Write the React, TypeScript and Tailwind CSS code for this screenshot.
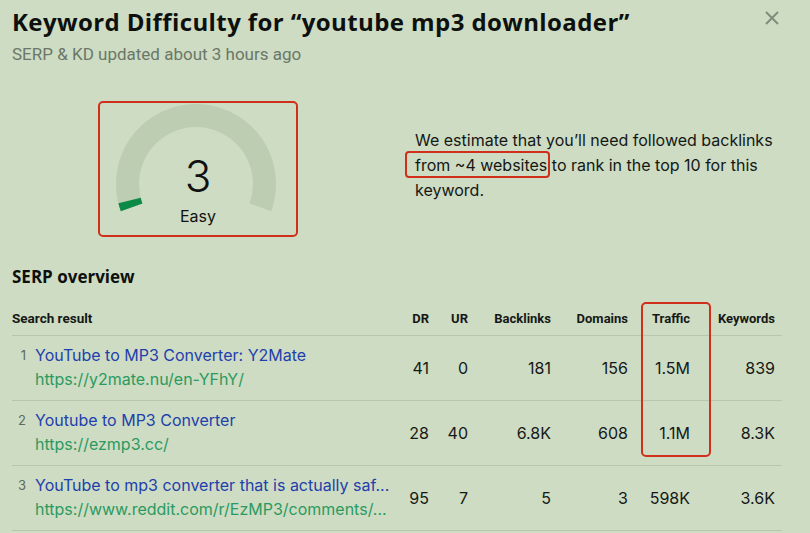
import React from "react";

const rows = [
  { n: 1, title: "YouTube to MP3 Converter: Y2Mate", url: "https://y2mate.nu/en-YFhY/", dr: "41", ur: "0", bl: "181", dom: "156", tr: "1.5M", kw: "839" },
  { n: 2, title: "Youtube to MP3 Converter", url: "https://ezmp3.cc/", dr: "28", ur: "40", bl: "6.8K", dom: "608", tr: "1.1M", kw: "8.3K" },
  { n: 3, title: "YouTube to mp3 converter that is actually saf...", url: "https://www.reddit.com/r/EzMP3/comments/...", dr: "95", ur: "7", bl: "5", dom: "3", tr: "598K", kw: "3.6K" },
];

const head = "font-['Roboto',sans-serif] font-bold text-[13px] text-[#161816]";
const grid = "grid grid-cols-[387px_30px_39px_83px_77px_62px_85px]";

function Gauge() {
  const cx = 96, cy = 81, r = 68.5;
  const pt = (deg: number) => {
    const a = (deg * Math.PI) / 180;
    return `${(cx + r * Math.cos(a)).toFixed(2)} ${(cy + r * Math.sin(a)).toFixed(2)}`;
  };
  return (
    <div className="relative w-[200px] h-[136px] border-2 border-[#d0301b] rounded-[5px]">
      <svg className="absolute left-0 top-0" width="196" height="132" viewBox="0 0 196 132">
        <path d={`M ${pt(160)} A ${r} ${r} 0 1 1 ${pt(380)}`} fill="none" stroke="#bccdb2" strokeWidth="23" />
        <path d={`M ${pt(160)} A ${r} ${r} 0 0 1 ${pt(166)}`} fill="none" stroke="#0b8a45" strokeWidth="23" />
      </svg>
      <div className="absolute left-0 top-0 w-[196px] flex flex-col items-center font-['Inter',sans-serif] text-[#111]">
        <div className="mt-[47px] text-[44px] leading-[52px] font-light">3</div>
        <div className="mt-[4px] text-[16px] leading-[20px]">Easy</div>
      </div>
    </div>
  );
}

export default function App() {
  return (
    <div className="w-[810px] h-[533px] overflow-hidden bg-[#cddcc3] relative pl-[12px]">
      <svg className="absolute left-[765px] top-[11px]" width="14" height="14" viewBox="0 0 14 14">
        <path d="M1 1 L13 13 M13 1 L1 13" stroke="#7f8e7c" strokeWidth="2" />
      </svg>
      <div className="pt-[6px] font-['Open_Sans',sans-serif] font-bold text-[24px] leading-[32px] text-[#0e100e] tracking-[0.4px]">
        Keyword Difficulty for “youtube mp3 downloader”
      </div>
      <div className="mt-[4px] font-['Roboto',sans-serif] text-[17px] leading-[24px] text-[#6b7768]">
        SERP &amp; KD updated about 3 hours ago
      </div>
      <div className="mt-[35px] flex items-start">
        <div className="ml-[86px]">
          <Gauge />
        </div>
        <div className="ml-[117px] mt-[27px] w-[372px] font-['Inter',sans-serif] text-[16px] leading-[25px] text-[#151715]">
          We estimate that you’ll need followed backlinks{" "}
          <span className="relative">
            from ~4 websites
            <span className="absolute -left-[10px] -right-[3px] -top-[4px] -bottom-[3px] border-2 border-[#d0301b] rounded-[4px]" />
          </span>{" "}
          to rank in the top 10 for this keyword.
        </div>
      </div>
      <div className="mt-[28px] font-['Open_Sans',sans-serif] font-bold text-[17px] leading-[24px] text-[#0e100e]">
        SERP overview
      </div>
      <div className="relative mt-[13px] w-[770px]">
        <div className="absolute left-[629px] top-0 w-[70px] h-[155px] border-2 border-[#d0301b] rounded-[5px]" />
        <div className={`${grid} h-[34px] items-center border-b border-[#b6c7ac] ${head}`}>
          <div className="text-[13.5px]">Search result</div>
          <div className="text-right">DR</div>
          <div className="text-right">UR</div>
          <div className="text-right">Backlinks</div>
          <div className="text-right">Domains</div>
          <div className="text-right">Traffic</div>
          <div className="text-right">Keywords</div>
        </div>
        {rows.map((r) => (
          <div key={r.n} className={`${grid} h-[65px] items-center border-b border-[#b6c7ac] font-['Inter',sans-serif] text-[16px] text-[#161816]`}>
            <div className="flex self-start pt-[7px]">
              <div className="w-[23px] shrink-0 text-right pr-[9px] text-[13px] leading-[24px] text-[#5e6a5c]">{r.n}</div>
              <div className="min-w-0">
                <div className="leading-[24px] text-[#1f40ac] whitespace-nowrap">{r.title}</div>
                <div className="leading-[24px] text-[#2b9a5f] whitespace-nowrap">{r.url}</div>
              </div>
            </div>
            <div className="text-right">{r.dr}</div>
            <div className="text-right">{r.ur}</div>
            <div className="text-right">{r.bl}</div>
            <div className="text-right">{r.dom}</div>
            <div className="text-right">{r.tr}</div>
            <div className="text-right">{r.kw}</div>
          </div>
        ))}
      </div>
    </div>
  );
}
